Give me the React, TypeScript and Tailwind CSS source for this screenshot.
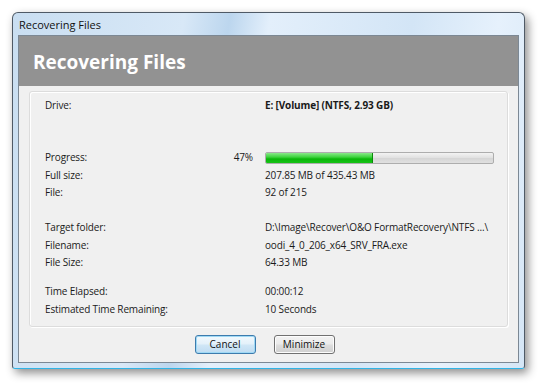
import React from "react";

const font = { fontFamily: '"Open Sans", "Noto Sans", sans-serif' };

function Row({ label, pct, value, bold }: { label: string; pct?: string; value: React.ReactNode; bold?: boolean }) {
  return (
    <div className="flex h-[17.5px] items-center">
      <div className="flex w-[208px] shrink-0 justify-between pr-[0px]">
        <span>{label}</span>
        {pct ? <span>{pct}</span> : null}
      </div>
      <div className="ml-[12px] flex-1">{bold ? <span className="font-bold">{value}</span> : value}</div>
    </div>
  );
}

function Progress({ value }: { value: number }) {
  return (
    <div className="ml-[12px] h-[12px] w-[229px] rounded-[2px] border border-[#adadad] bg-[linear-gradient(#f3f3f3,#e2e2e2_45%,#d6d6d6_55%,#e0e0e0)] p-0 overflow-hidden">
      <div
        className="h-full bg-[linear-gradient(#8ae88a,#3fd43f_40%,#0ab60a_60%,#16c316)] border-r border-[#0a8a0a]"
        style={{ width: `${value}%` }}
      />
    </div>
  );
}

export default function App() {
  return (
    <div className="relative h-[385px] w-[540px] overflow-hidden bg-white pl-[12px] pt-[12px]" style={font}>
      <div className="flex h-[357px] w-[513px] flex-col rounded-t-[6px] rounded-b-[3px] border border-[#4f5a66] border-b-[#2fb4e6] bg-[linear-gradient(100deg,#c9def1_0%,#d8e8f7_30%,#bcd6ee_38%,#e3effb_45%,#d3e5f6_70%,#e6f1fc_85%,#d5e6f6_100%)] shadow-[3px_4px_10px_rgba(0,0,0,0.45)]">
        <div className="flex h-[22px] shrink-0 items-center pl-[6px] pt-[2px] text-[11px] text-[#111]">Recovering Files</div>
        <div className="mx-[5px] mb-[5px] flex flex-1 flex-col border border-[#7c8894] bg-[#f0f0f0]">
          <div className="flex h-[50px] shrink-0 items-center bg-[#929292] pl-[14px] pt-[2px] text-[19px] font-bold text-white">
            Recovering Files
          </div>
          <div className="mx-[10px] mt-[5px] flex h-[236px] flex-col rounded-[3px] border border-[#dcdcdc] bg-[#f0f0f0] pl-[15px] pt-[5px] text-[10px] tracking-[-0.15px] text-[#1a1a1a] shadow-[inset_1px_1px_0_#ffffff,1px_1px_0_#ffffff]">
            <Row label="Drive:" value="E: [Volume] (NTFS, 2.93 GB)" bold />
            <div className="h-[34.5px]" />
            <div className="flex h-[17.5px] items-center">
              <div className="flex w-[208px] shrink-0 justify-between">
                <span>Progress:</span>
                <span>47%</span>
              </div>
              <Progress value={47} />
            </div>
            <Row label="Full size:" value="207.85 MB of 435.43 MB" />
            <Row label="File:" value="92 of 215" />
            <div className="h-[17.5px]" />
            <Row label="Target folder:" value="D:\Image\Recover\O&O FormatRecovery\NTFS ...\" />
            <Row label="Filename:" value="oodi_4_0_206_x64_SRV_FRA.exe" />
            <Row label="File Size:" value="64.33 MB" />
            <div className="h-[11.5px]" />
            <Row label="Time Elapsed:" value="00:00:12" />
            <Row label="Estimated Time Remaining:" value="10 Seconds" />
          </div>
          <div className="mt-[8px] flex justify-center gap-[18px] pr-[8px] text-[10px] text-[#111]">
            <button className="h-[19px] w-[61px] rounded-[3px] border border-[#3d7bad] bg-[linear-gradient(#f2f9fd,#e4f1fa_45%,#cfe6f6_55%,#bfdcf2)] shadow-[inset_0_0_0_1px_#9fd9f5]">
              Cancel
            </button>
            <button className="h-[19px] w-[61px] rounded-[3px] border border-[#707070] bg-[linear-gradient(#f2f2f2,#ebebeb_45%,#dddddd_55%,#cfcfcf)] shadow-[inset_0_0_0_1px_#fcfcfc]">
              Minimize
            </button>
          </div>
        </div>
      </div>
    </div>
  );
}
